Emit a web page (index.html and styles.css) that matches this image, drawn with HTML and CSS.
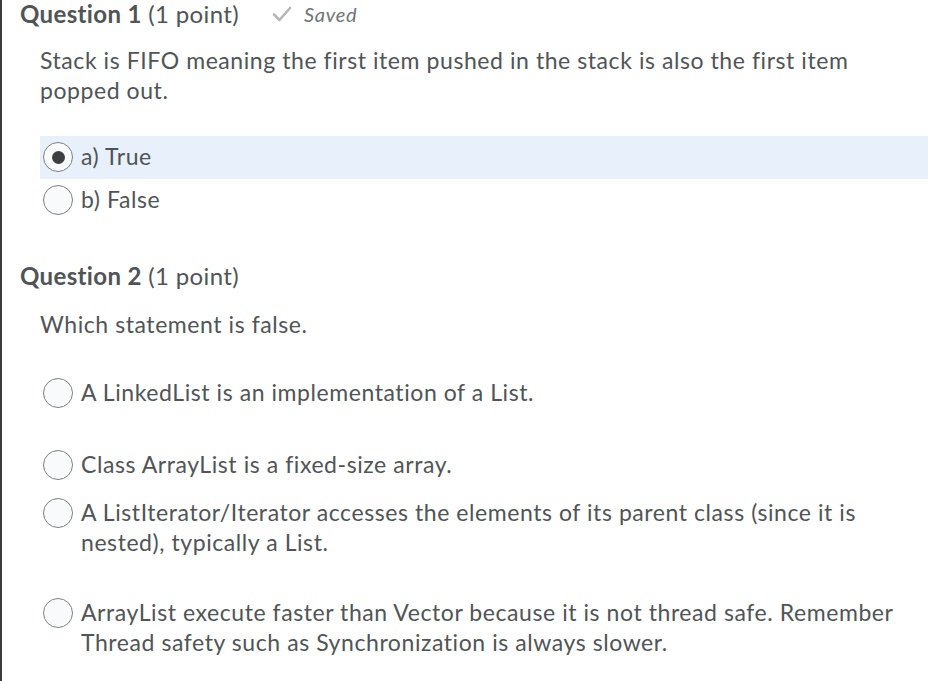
FILE: index.html
```html
<!DOCTYPE html>
<html>
<head>
<meta charset="utf-8">
<link rel="stylesheet" href="styles.css">
</head>
<body>
<div class="page">
  <section class="question q1">
    <div class="q-head">
      <h2 class="q-title"><strong>Question 1</strong> (1 point)</h2>
      <span class="saved">
        <svg class="check" width="20" height="16" viewBox="0 0 20 16"><path d="M2 8.5 L7.5 14 L18 2" fill="none" stroke="#b5b7b9" stroke-width="2.6" stroke-linecap="round" stroke-linejoin="round"/></svg>
        <em>Saved</em>
      </span>
    </div>
    <p class="q-text">Stack is FIFO meaning the first item pushed in the stack is also the first item popped out.</p>
    <div class="options">
      <div class="opt selected"><span class="radio"><span class="dot"></span></span><span class="label">a) True</span></div>
      <div class="opt"><span class="radio"></span><span class="label">b) False</span></div>
    </div>
  </section>
  <section class="question q2">
    <div class="q-head">
      <h2 class="q-title"><strong>Question 2</strong> (1 point)</h2>
    </div>
    <p class="q-text">Which statement is false.</p>
    <div class="options">
      <div class="opt gap-lg"><span class="radio"></span><span class="label">A LinkedList is an implementation of a List.</span></div>
      <div class="opt"><span class="radio"></span><span class="label">Class ArrayList is a fixed-size array.</span></div>
      <div class="opt gap-md"><span class="radio"></span><span class="label">A ListIterator/Iterator accesses the elements of its parent class (since it is nested), typically a List.</span></div>
      <div class="opt"><span class="radio"></span><span class="label">ArrayList execute faster than Vector because it is not thread safe. Remember Thread safety such as Synchronization is always slower.</span></div>
    </div>
  </section>
</div>
</body>
</html>
```
FILE: styles.css
```css
html, body {
  margin: 0;
  padding: 0;
  background: #fff;
}
body {
  font-family: Lato, "Open Sans", sans-serif;
  color: #505457;
  font-size: 23px;
  letter-spacing: 0.57px;
  font-variant-ligatures: none;
}
.page {
  border-left: 2px solid #3a3a3a;
  min-height: 681px;
  box-sizing: border-box;
  padding-left: 18px;
  padding-right: 4px;
}
.q-head {
  display: flex;
  align-items: center;
  height: 28px;
}
.q-title {
  margin: 0;
  font-size: 24px;
  font-weight: 400;
  line-height: 28px;
  letter-spacing: 0.35px;
}
.q-title strong {
  font-weight: 700;
}
.saved {
  display: flex;
  align-items: center;
  margin-left: 33px;
  color: #707477;
  font-size: 20px;
  letter-spacing: 0.7px;
}
.saved .check {
  margin-right: 12px;
}
.q-text {
  margin: 17px 0 0 20px;
  line-height: 30px;
  padding-right: 60px;
}
.options {
  margin-top: 31px;
  margin-left: 20px;
  display: flex;
  flex-direction: column;
}
.opt {
  display: flex;
  align-items: flex-start;
  padding: 5px 0 7px 3px;
  line-height: 30px;
}
.label {
  padding-right: 30px;
}
.opt.selected {
  background: #e8f1fb;
}
.radio {
  flex: none;
  width: 28px;
  height: 28px;
  margin-top: 1px;
  border: 1px solid #7d8184;
  border-radius: 50%;
  background: #f9fafc;
  margin-right: 8px;
  display: flex;
  align-items: center;
  justify-content: center;
}
.dot {
  width: 13px;
  height: 13px;
  border-radius: 50%;
  background: #3d3f41;
}
.q2 {
  margin-top: 40px;
}
.q2 .q-text {
  margin-top: 19px;
}
.q2 .options {
  margin-top: 33px;
}
.q2 .opt + .opt {
  margin-top: 5px;
}
.q2 .opt.gap-lg {
  margin-bottom: 24px;
}
.q2 .opt.gap-md {
  margin-bottom: 23px;
}
```
